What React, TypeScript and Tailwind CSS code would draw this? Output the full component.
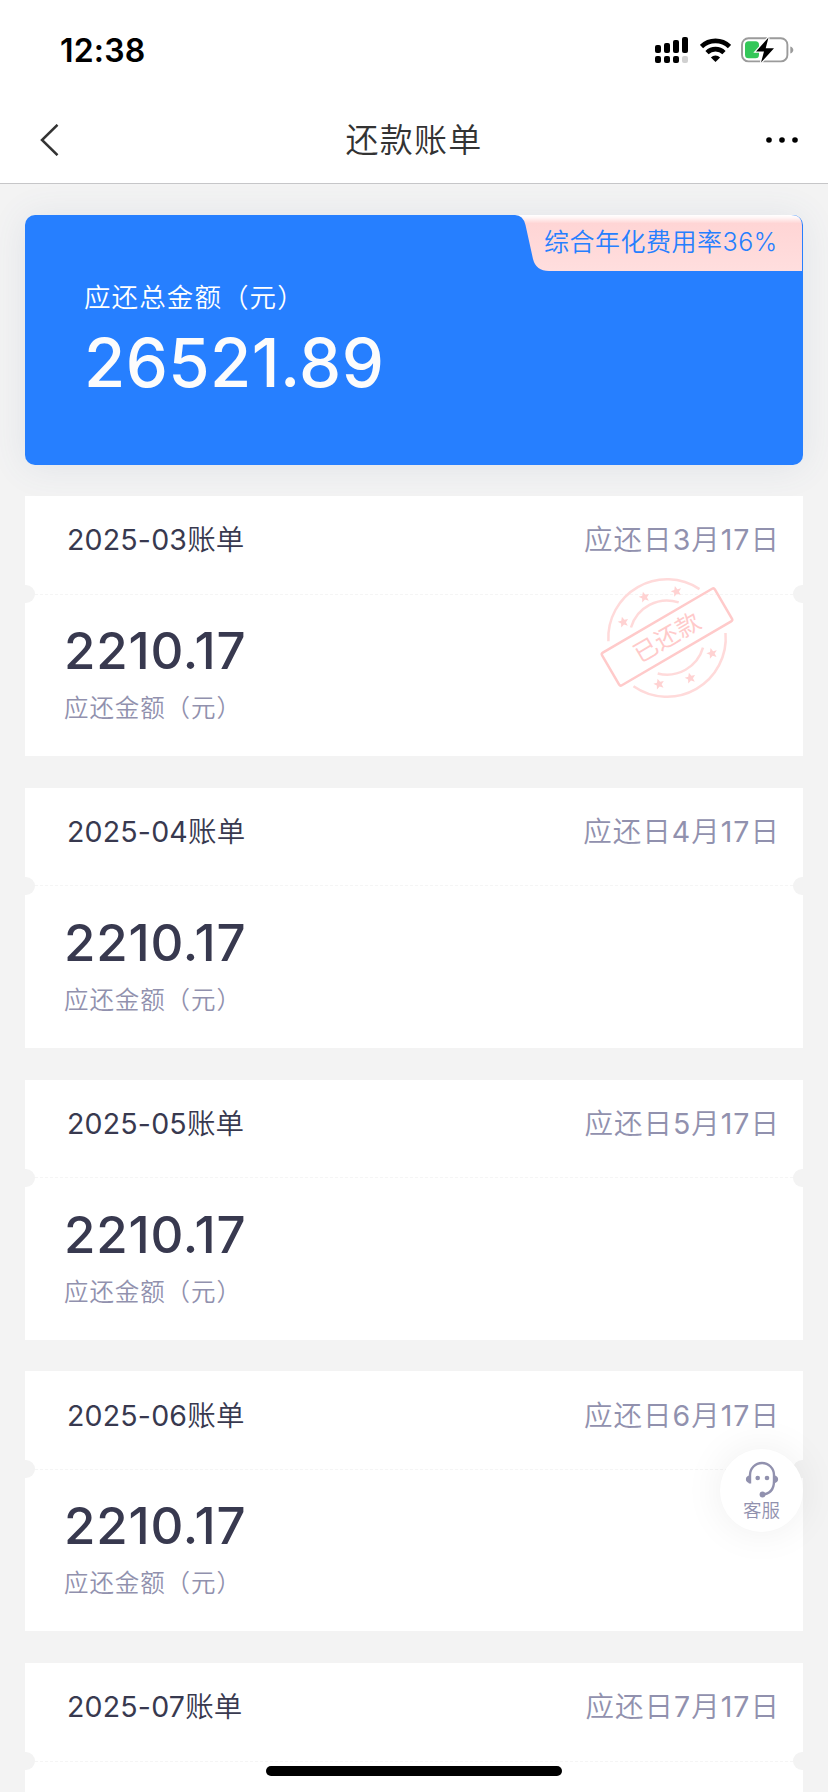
import React from 'react';

interface Bill {
  month: string;
  due: [number, number];
  amount?: string;
  paid?: boolean;
}

const bills: Bill[] = [
  { month: '2025-03', due: [3, 17], amount: '2210.17', paid: true },
  { month: '2025-04', due: [4, 17], amount: '2210.17' },
  { month: '2025-05', due: [5, 17], amount: '2210.17' },
  { month: '2025-06', due: [6, 17], amount: '2210.17' },
  { month: '2025-07', due: [7, 17] },
];

// Star positions, relative to the stamp's centre
const stars = [
  [-22.7, -41],
  [9.3, -46.7],
  [-43.7, -16],
  [45, 15.3],
  [23.3, 40],
  [-8, 46],
];

const StatusBar: React.FC = () => (
  <div className="flex h-[98px] items-center justify-between pl-[60px] pr-[34px]">
    <span className="pt-[3px] text-[32px] leading-none font-semibold tracking-[0.2px] text-black">12:38</span>
    <div className="flex items-center gap-3 pt-px">
      {/* Dual SIM signal */}
      <svg className="h-[26px] w-[33px]" viewBox="0 0 33 26">
        <rect x="0" y="8" width="6" height="8" rx="2" />
        <rect x="9" y="6" width="6" height="10" rx="2" />
        <rect x="18" y="3" width="6" height="13" rx="2" />
        <rect x="27" y="0" width="6" height="16" rx="2" />
        <rect x="0" y="19" width="6" height="7" rx="2" />
        <rect x="9" y="19" width="6" height="7" rx="2" />
        <rect x="18" y="19" width="6" height="7" rx="2" />
        <rect x="27" y="19" width="6" height="7" rx="2" fill="#d0d0d0" />
      </svg>
      {/* Wifi */}
      <svg className="h-6 w-[31px]" viewBox="0 0 31 24" fill="none" stroke="#000" strokeWidth="4.6">
        <path d="M1.5 8.6a20 20 0 0 1 28 0" />
        <path d="M7 14.6a12.2 12.2 0 0 1 17 0" />
        <path d="M15.5 24l-4.6-4.6a6.6 6.6 0 0 1 9.2 0z" fill="#000" stroke="none" />
      </svg>
      {/* Charging battery */}
      <svg className="-ml-[2px] h-[26px] w-[53px]" viewBox="0 0 53 26">
        <rect x="1" y="1.2" width="45.4" height="23.2" rx="6.5" fill="none" stroke="#9b9b9b" strokeWidth="1.9" />
        <path d="M49.3 9.5c4 1.2 4 5.8 0 7z" fill="#9b9b9b" />
        <rect x="4" y="4.3" width="14" height="17" rx="3.5" fill="#34c759" />
        <path d="M27.5 0.5L15 14.5h8L20 25.5l13-14.3h-8.3z" fill="#000" stroke="#fff" strokeWidth="2.4" paintOrder="stroke" />
      </svg>
    </div>
  </div>
);

const NavBar: React.FC = () => (
  <div className="flex h-[86px] items-center justify-between border-b border-[#c6c6c8] pr-[29px] pb-[2px] pl-10">
    <svg className="h-8 w-[60px]" viewBox="0 0 60 32" fill="none" stroke="#333" strokeWidth="2.5">
      <path d="M17.5 0.8L2 16l15.5 15.2" />
    </svg>
    <h1 className="mr-[11px] pt-[2px] text-[33px] leading-none font-[350] tracking-[1.3px] text-[#333]">还款账单</h1>
    <svg className="h-6 w-[60px]" viewBox="0 0 60 24" fill="#000">
      <circle cx="30" cy="12" r="2.8" />
      <circle cx="43" cy="12" r="2.8" />
      <circle cx="56" cy="12" r="2.8" />
    </svg>
  </div>
);

const PaidStamp: React.FC = () => (
  <svg
    className="absolute top-[79px] left-[571px] h-[126px] w-[142px]"
    viewBox="-71 -63 142 126"
    fill="none"
    stroke="#ffdada"
    strokeWidth="2.5"
  >
    <path d="M-58.6 3.3A58.7 58.7 0 0 1 32.5-48.9" />
    <path d="M58.5-5A58.7 58.7 0 0 1-33.5 48.2" />
    <path d="M-36-10.5A37.5 37.5 0 0 1 11.7-35.6" />
    <path d="M36 9.7A37.5 37.5 0 0 1-9.3 35.5" />
    {stars.map(([x, y]) => (
      <path
        key={`${x}`}
        transform={`translate(${x} ${y}) rotate(-15)`}
        fill="#ffd2d2"
        stroke="none"
        d="M0-5.5L1.6-1.8 5.4-1.6 2.5 0.9 3.4 4.7 0 2.6-3.4 4.7-2.5 0.9-5.4-1.6-1.6-1.8z"
      />
    ))}
    <g transform="translate(0 -1) rotate(-30.3)">
      <rect x="-65.3" y="-18.9" width="130.6" height="37.8" rx="2" stroke="#ffcaca" />
      <text x="0" y="8.8" textAnchor="middle" fill="#ffcaca" stroke="none" fontSize="24" fontWeight="400" letterSpacing="0.5">
        已还款
      </text>
    </g>
  </svg>
);

const SummaryCard: React.FC = () => (
  <div className="relative h-[250px] rounded-[10px] bg-[#267fff] pt-[65px] pl-[59px] text-white shadow-[0_2px_36px_rgba(70,100,150,0.11)]">
    <div className="text-[26.5px] leading-[34px] font-[350] tracking-[1.1px]">应还总金额（元）</div>
    <div className="mt-[9px] text-[67px] leading-[80px] font-[480] tracking-[0.4px] text-[#fcfcfc]">26521.89</div>

    {/* Rate tag in the corner */}
    <div className="absolute top-0 right-px flex h-14 w-[287px] items-center pb-px pl-[29px]">
      <svg className="absolute inset-0 h-14 w-[287px]" viewBox="0 0 287 56">
        <defs>
          <linearGradient id="tag" x1="0" y1="0" x2="0" y2="1">
            <stop offset="0" stopColor="#fff" />
            <stop offset="0.05" stopColor="#fff5f5" />
            <stop offset="0.15" stopColor="#ffd5d5" />
            <stop offset="1" stopColor="#ffdede" />
          </linearGradient>
        </defs>
        <path d="M0 0H276Q287 0 287 11V56H34Q21 56 18 44L10.5 10Q8 0 0 0z" fill="url(#tag)" />
      </svg>
      <span className="relative text-[25px] leading-none font-[350] tracking-[0.5px] whitespace-nowrap text-[#267fff]">
        综合年化费用率36%
      </span>
    </div>
  </div>
);

const BillCard: React.FC<Bill> = ({ month, due, amount, paid }) => (
  <div className="relative h-[260px] shrink-0 bg-white">
    <div className="flex h-[89px] items-center justify-between pr-[23px] pl-[42px] text-[28.5px] leading-none font-[350]">
      <span className="tracking-[0.2px] text-[#38394f]">
        <span className="font-normal">{month}</span>账单
      </span>
      <span className="tracking-[1px] text-[#9191ae]">
        应还日<span className="font-normal">{due[0]}</span>月<span className="font-normal">{due[1]}</span>日
      </span>
    </div>
    {/* Perforation with a notch on each side */}
    <div className="flex h-[18px] items-center">
      <div className="h-[18px] w-[10px] rounded-r-full bg-[#f3f3f3]" />
      <div className="flex-1 border-t border-dashed border-[#f5f5f5]" />
      <div className="h-[18px] w-[10px] rounded-l-full bg-[#f3f3f3]" />
    </div>
    {amount && (
      <div className="pt-[18px] pl-[39px]">
        <div className="text-[51px] leading-[60px] font-[480] tracking-[0.8px] text-[#38394f]">{amount}</div>
        <div className="mt-[12px] text-[24.5px] leading-[30px] font-[350] tracking-[0.9px] text-[#9191ae]">
          应还金额（元）
        </div>
      </div>
    )}
    {paid && <PaidStamp />}
  </div>
);

const ServiceButton: React.FC = () => (
  <button className="absolute top-[1449px] left-[720px] flex h-[83px] w-[83px] flex-col items-center rounded-full bg-white pt-3 shadow-[0_0_40px_rgba(0,0,0,0.07)]">
    <svg className="h-[37px] w-[34px]" viewBox="0 0 34 37" fill="none" stroke="#9191ae" strokeWidth="2.4">
      <path d="M5 22.5V14a12 12 0 0 1 24 0v6c0 8-4 13-12 13.7" />
      <path d="M5 14.5v7.5c-5.5 0-5.5-7.5 0-7.5zM29 14.5v7.5c5.5 0 5.5-7.5 0-7.5z" fill="#9191ae" stroke="none" />
      <circle cx="12.7" cy="17" r="2.3" fill="#9191ae" stroke="none" />
      <circle cx="22" cy="17" r="2.3" fill="#9191ae" stroke="none" />
      <circle cx="17.5" cy="33.5" r="2.9" fill="#9191ae" stroke="none" />
    </svg>
    <span className="mt-[3px] text-[18.5px] leading-none font-[350] text-[#9191ae]">客服</span>
  </button>
);

const App: React.FC = () => {
  return (
    <div className="relative flex h-[1792px] w-[828px] flex-col overflow-hidden bg-[#f3f3f3] font-['Inter','Noto_Sans_CJK_SC',sans-serif]">
      <header className="relative z-10 shrink-0 bg-white">
        <StatusBar />
        <NavBar />
      </header>
      <main className="flex flex-col gap-[31.75px] px-[25px] pt-[31px]">
        <div className="-mb-[0.75px] shrink-0">
          <SummaryCard />
        </div>
        {bills.map((bill) => (
          <BillCard key={bill.month} {...bill} />
        ))}
      </main>
      <ServiceButton />
      {/* Home indicator */}
      <div className="absolute bottom-4 left-[266px] h-[10px] w-[296px] rounded-full bg-black" />
    </div>
  );
};

export default App;
